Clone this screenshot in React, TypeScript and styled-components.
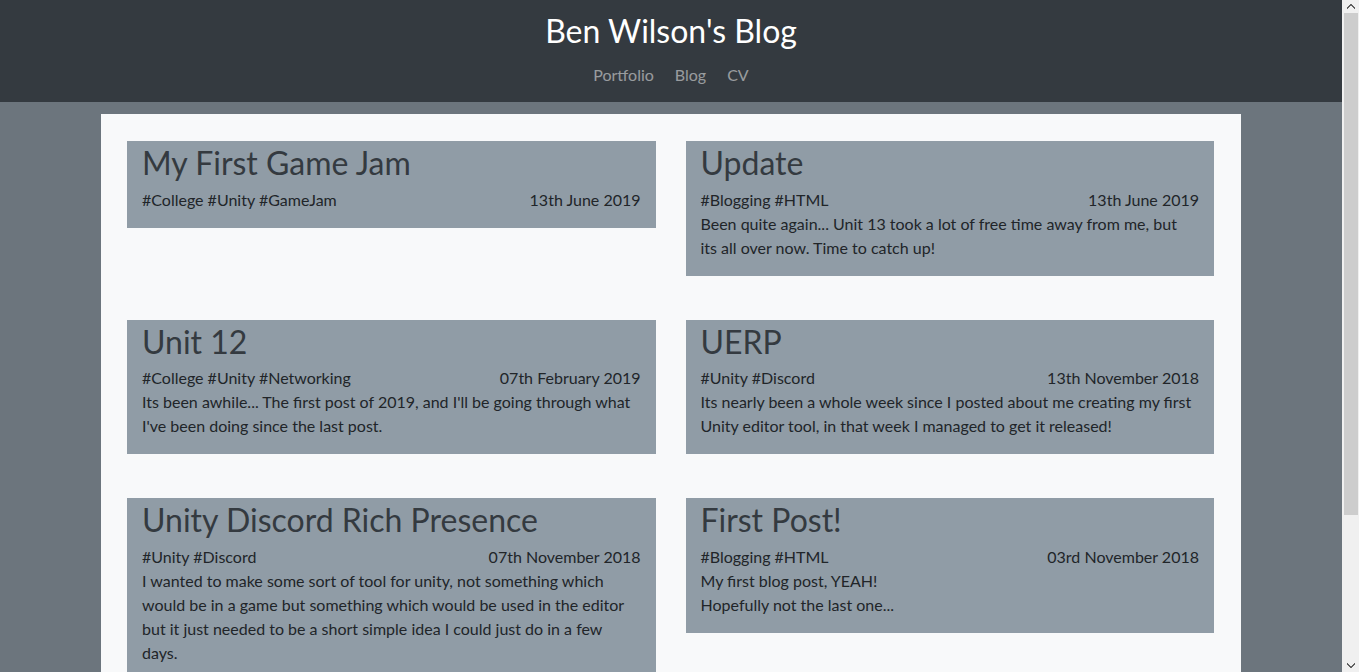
import React from "react"
import styled, { createGlobalStyle } from "styled-components"

const GlobalStyle = createGlobalStyle`
  html, body {
    margin: 0;
    padding: 0;
  }
  body {
    background-color: #6c757d;
    font-family: "Segoe UI", Lato, "Liberation Sans", sans-serif;
    font-size: 16px;
    line-height: 1.5;
    color: #212529;
    margin-right: 17px;
  }
`

const Header = styled.header`
  background-color: #343a40;
  padding: 12px 0 15px;
  text-align: center;
`

const SiteTitle = styled.h1`
  margin: 0 0 13px;
  color: #fff;
  font-size: 32px;
  font-weight: 400;
  line-height: 1.2;
`

const Nav = styled.nav`
  display: flex;
  justify-content: center;
  gap: 21px;
`

const NavLink = styled.a`
  color: rgba(255, 255, 255, 0.5);
  text-decoration: none;
`

const Main = styled.main`
  width: 1140px;
  margin: 12px auto 0;
  background-color: #f8f9fa;
  padding: 27px 27px 40px 26px;
  box-sizing: border-box;
  display: grid;
  grid-template-columns: 1fr 1fr;
  column-gap: 30px;
  row-gap: 44px;
  align-items: start;
`

const Card = styled.article`
  background-color: #909ca6;
  padding: 0 15px 16px 15px;
`

const CardTitle = styled.h2`
  margin: 0 0 5px;
  padding-top: 3px;
  color: #343a40;
  font-size: 32px;
  font-weight: 400;
  line-height: 1.2;
`

const Meta = styled.div`
  display: flex;
  justify-content: space-between;
`

const Body = styled.p`
  margin: 0;
  padding-right: 4px;
`

// fake classic scrollbar, overlays the right edge of the window
const Scrollbar = styled.div`
  position: fixed;
  top: 0;
  right: 0;
  width: 17px;
  height: 100vh;
  background-color: #f0f0f0;
  display: flex;
  flex-direction: column;
  align-items: center;
`

const Arrow = styled.div`
  height: 13px;
  width: 17px;
  display: flex;
  align-items: center;
  justify-content: center;
`

const Track = styled.div`
  flex: 1;
  width: 100%;
  display: flex;
  flex-direction: column;
`

const Thumb = styled.div`
  height: 502px;
  margin: 0 1px 0 2px;
  background-color: #cdcdcd;
`

type Post = {
  title: string
  tags: string
  date: string
  lines: string[]
}

const posts: Post[] = [
  { title: "My First Game Jam", tags: "#College #Unity #GameJam", date: "13th June 2019", lines: [] },
  {
    title: "Update",
    tags: "#Blogging #HTML",
    date: "13th June 2019",
    lines: ["Been quite again... Unit 13 took a lot of free time away from me, but its all over now. Time to catch up!"],
  },
  {
    title: "Unit 12",
    tags: "#College #Unity #Networking",
    date: "07th February 2019",
    lines: ["Its been awhile... The first post of 2019, and I'll be going through what I've been doing since the last post."],
  },
  {
    title: "UERP",
    tags: "#Unity #Discord",
    date: "13th November 2018",
    lines: ["Its nearly been a whole week since I posted about me creating my first Unity editor tool, in that week I managed to get it released!"],
  },
  {
    title: "Unity Discord Rich Presence",
    tags: "#Unity #Discord",
    date: "07th November 2018",
    lines: [
      "I wanted to make some sort of tool for unity, not something which would be in a game but something which would be used in the editor but it just needed to be a short simple idea I could just do in a few days.",
    ],
  },
  {
    title: "First Post!",
    tags: "#Blogging #HTML",
    date: "03rd November 2018",
    lines: ["My first blog post, YEAH!", "Hopefully not the last one..."],
  },
]

export default function App() {
  return (
    <>
      <GlobalStyle />
      <Header>
        <SiteTitle>Ben Wilson's Blog</SiteTitle>
        <Nav>
          <NavLink href="#">Portfolio</NavLink>
          <NavLink href="#">Blog</NavLink>
          <NavLink href="#">CV</NavLink>
        </Nav>
      </Header>
      <Main>
        {posts.map((p) => (
          <Card key={p.title}>
            <CardTitle>{p.title}</CardTitle>
            <Meta>
              <span>{p.tags}</span>
              <span>{p.date}</span>
            </Meta>
            {p.lines.length > 0 && (
              <Body>
                {p.lines.map((l, i) => (
                  <React.Fragment key={i}>
                    {i > 0 && <br />}
                    {l}
                  </React.Fragment>
                ))}
              </Body>
            )}
          </Card>
        ))}
      </Main>
      <Scrollbar>
        <Arrow>
          <svg width="8" height="5" viewBox="0 0 8 5" shapeRendering="crispEdges">
            <path d="M3 0h2v1h1v1h1v1h1v2h-1v-1h-1v-1h-1v-1h-2v1h-1v1h-1v1h-1v-2h1v-1h1v-1h1z" fill="#606060" />
          </svg>
        </Arrow>
        <Track>
          <Thumb />
        </Track>
        <Arrow>
          <svg width="8" height="5" viewBox="0 0 8 5" shapeRendering="crispEdges">
            <path d="M3 5h2v-1h1v-1h1v-1h1v-2h-1v1h-1v1h-1v1h-2v-1h-1v-1h-1v-1h-1v2h1v1h1v1h1z" fill="#606060" />
          </svg>
        </Arrow>
      </Scrollbar>
    </>
  )
}
